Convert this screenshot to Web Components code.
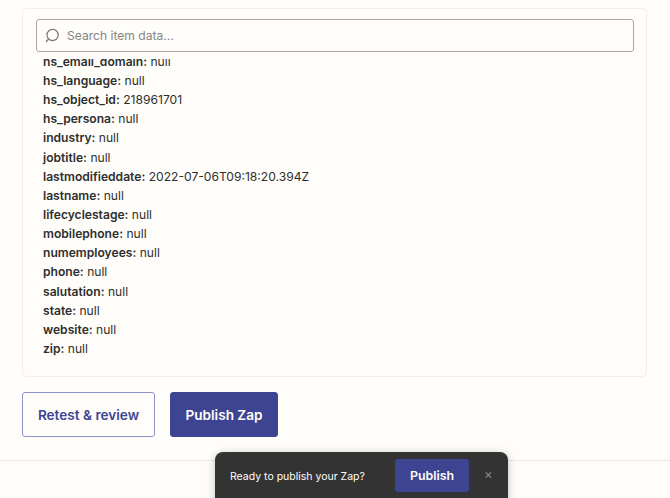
<!DOCTYPE html>
<html>
<head>
<meta charset="utf-8">
<style>
  html, body { margin: 0; height: 100%; }
  body { background: #fffdf9; font-family: Inter, "Liberation Sans", sans-serif; overflow: hidden; }
</style>
</head>
<body>
<zap-page>
  <item-card>
    <data-row name="hs_email_domain" value="null"></data-row>
    <data-row name="hs_language" value="null"></data-row>
    <data-row name="hs_object_id" value="218961701"></data-row>
    <data-row name="hs_persona" value="null"></data-row>
    <data-row name="industry" value="null"></data-row>
    <data-row name="jobtitle" value="null"></data-row>
    <data-row name="lastmodifieddate" value="2022-07-06T09:18:20.394Z"></data-row>
    <data-row name="lastname" value="null"></data-row>
    <data-row name="lifecyclestage" value="null"></data-row>
    <data-row name="mobilephone" value="null"></data-row>
    <data-row name="numemployees" value="null"></data-row>
    <data-row name="phone" value="null"></data-row>
    <data-row name="salutation" value="null"></data-row>
    <data-row name="state" value="null"></data-row>
    <data-row name="website" value="null"></data-row>
    <data-row name="zip" value="null"></data-row>
  </item-card>
  <action-bar></action-bar>
</zap-page>
<publish-toast></publish-toast>
<script>
class ZapPage extends HTMLElement {
  constructor() {
    super();
    this.attachShadow({ mode: 'open' });
    this.shadowRoot.innerHTML = `
      <style>
        :host {
          display: block;
          height: 461px;
          box-sizing: border-box;
          padding: 8px 22px 0;
          border-bottom: 1px solid #e9e7e3;
        }
      </style>
      <slot></slot>
    `;
  }
}

class ItemCard extends HTMLElement {
  constructor() {
    super();
    this.attachShadow({ mode: 'open' });
    this.shadowRoot.innerHTML = `
      <style>
        :host {
          display: block;
          width: 625px;
          height: 369px;
          box-sizing: border-box;
          padding: 10px 12px 0 13px;
          border: 1px solid #f1efeb;
          border-radius: 5px;
        }
        .search {
          display: flex;
          align-items: center;
          gap: 6px;
          height: 33px;
          box-sizing: border-box;
          padding: 0 0 0 7px;
          border: 1px solid #a9a8a5;
          border-radius: 3px;
          color: #868582;
          font-size: 12.1px;
        }
        svg { display: block; flex: none; }
        .list {
          margin-top: 7px;
          height: 298px;
          overflow: hidden;
          padding-left: 7px;
        }
        .inner { margin-top: -7.2px; }
      </style>
      <div class="search">
        <svg width="17" height="17" viewBox="0 0 17 17" fill="none" stroke="#777673" stroke-width="1.2">
          <circle cx="8.6" cy="8" r="5.6"/>
          <path d="M4.5 12 L2 15"/>
        </svg>
        <span>Search item data...</span>
      </div>
      <div class="list"><div class="inner"><slot></slot></div></div>
    `;
  }
}

class DataRow extends HTMLElement {
  constructor() {
    super();
    this.attachShadow({ mode: 'open' });
  }
  connectedCallback() {
    this.shadowRoot.innerHTML = `
      <style>
        :host {
          display: block;
          height: 19.15px;
          line-height: 19.15px;
          font-size: 12.1px;
          color: #2d2e2e;
          white-space: nowrap;
        }
        b { font-weight: 600; }
      </style>
      <b>${this.getAttribute('name')}:</b> ${this.getAttribute('value')}
    `;
  }
}

class ActionBar extends HTMLElement {
  constructor() {
    super();
    this.attachShadow({ mode: 'open' });
    this.shadowRoot.innerHTML = `
      <style>
        :host {
          display: flex;
          gap: 15px;
          margin-top: 15px;
        }
        button {
          height: 45px;
          box-sizing: border-box;
          border-radius: 3px;
          font: 600 13.6px Inter, "Liberation Sans", sans-serif;
          padding: 0;
        }
        .outline {
          width: 133px;
          background: #fffdf9;
          color: #3d4592;
          border: 1px solid #8f95cb;
        }
        .solid {
          width: 108px;
          background: #3d4592;
          color: #fffdf9;
          border: 1px solid #3d4592;
        }
      </style>
      <button class="outline">Retest &amp; review</button>
      <button class="solid">Publish Zap</button>
    `;
  }
}

class PublishToast extends HTMLElement {
  constructor() {
    super();
    this.attachShadow({ mode: 'open' });
    this.shadowRoot.innerHTML = `
      <style>
        :host {
          position: absolute;
          left: 215px;
          top: 452px;
          width: 293px;
          height: 60px;
          box-sizing: border-box;
          display: flex;
          align-items: flex-start;
          padding: 7px 0 0 15px;
          background: #333333;
          border-radius: 8px 8px 0 0;
          box-shadow: 0 2px 8px rgba(0,0,0,0.25);
          color: #fffdf9;
          font-size: 10.5px;
        }
        .msg { width: 165px; line-height: 35px; white-space: nowrap; }
        button {
          width: 74px;
          height: 33px;
          padding: 0;
          background: #3d4592;
          color: #fffdf9;
          border: 0;
          border-radius: 3px;
          font: 600 12.4px Inter, "Liberation Sans", sans-serif;
        }
        .x { margin-left: 15px; line-height: 30px; color: #8b8b8a; font-size: 13px; }
      </style>
      <span class="msg">Ready to publish your Zap?</span>
      <button>Publish</button>
      <span class="x">×</span>
    `;
  }
}

customElements.define('zap-page', ZapPage);
customElements.define('item-card', ItemCard);
customElements.define('data-row', DataRow);
customElements.define('action-bar', ActionBar);
customElements.define('publish-toast', PublishToast);
</script>
</body>
</html>
